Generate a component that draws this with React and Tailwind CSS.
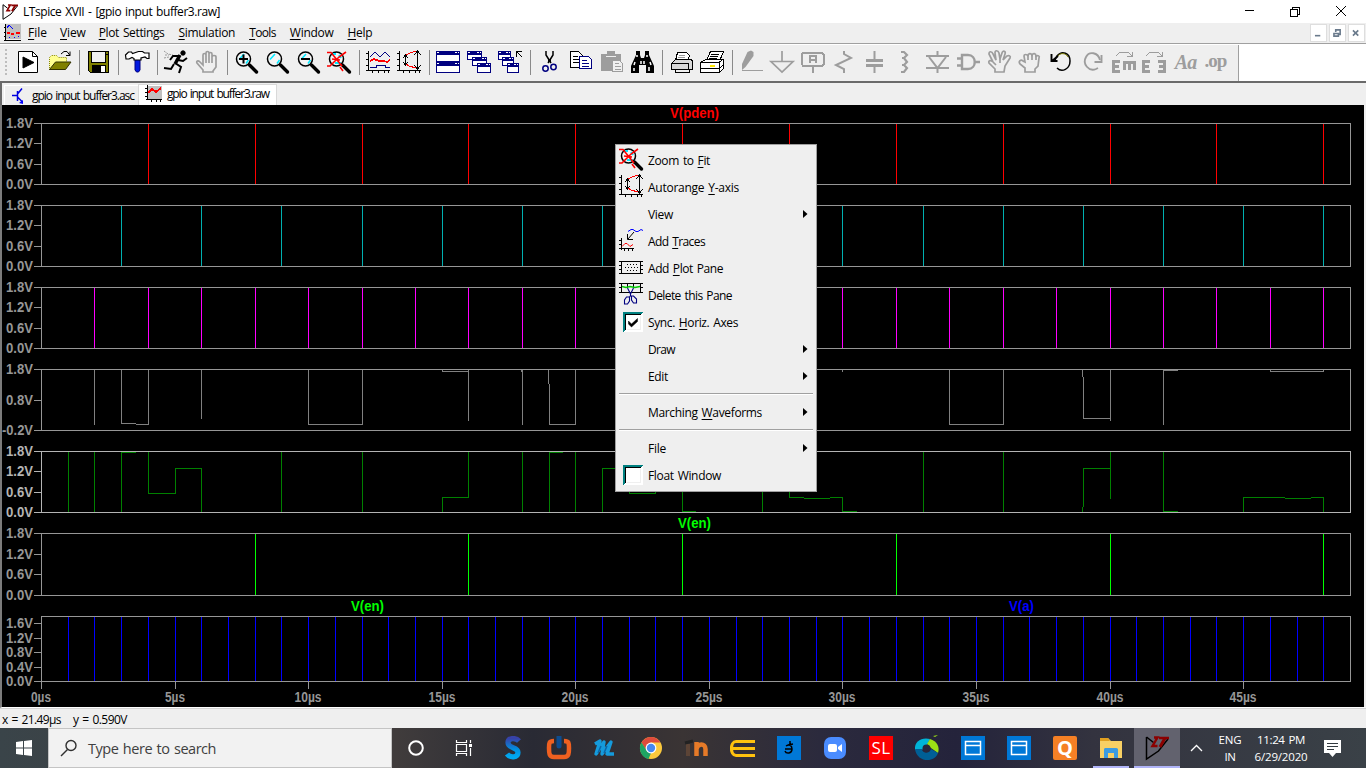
import { useLayoutEffect, useRef, useState } from "react";

// Text set to a fixed advance width through letter spacing.
function T({ w, children, className = "" }) {
  const ref = useRef(null);
  const [ls, setLs] = useState(0);
  useLayoutEffect(() => {
    const el = ref.current;
    const natural = el.getBoundingClientRect().width;
    setLs((w - natural) / el.textContent.length);
  }, [w]);
  return (
    <span ref={ref} className={"inline-block whitespace-pre [word-spacing:1.2px] " + className} style={{ letterSpacing: ls + "px" }}>
      {children}
    </span>
  );
}

// "&" marks the accelerator letter.
function Accel({ text }) {
  const i = text.indexOf("&");
  if (i < 0) return text;
  return (
    <>
      {text.slice(0, i)}
      <u className="underline underline-offset-2">{text[i + 1]}</u>
      {text.slice(i + 2)}
    </>
  );
}

const G = "#9d9d9d";

function Ico({ children, ...p }) {
  return (
    <svg width="25" height="25" viewBox="0 0 25 25" fill="none" stroke="#000" strokeWidth="1" className="block shrink-0 overflow-visible" {...p}>
      {children}
    </svg>
  );
}

const Lens = ({ sign, cross, ...p }) => (
  <Ico {...p}>
    <circle cx="9.500" cy="9" r="7" fill="#f4f4f4" strokeWidth="1.500" />
    {!cross && <path d="M5 9.500l5-5.500M12 13.500l2.500-3.500" stroke="#00e8ff" strokeWidth="1.500" />}
    {cross && <path d="M6 4h3M8 13h6M12 5l2 3" stroke="#00e8ff" strokeWidth="2" />}
    <path d="M15.500 15l7 7" strokeWidth="3.400" strokeLinecap="round" />
    {sign && <path d={sign} strokeWidth="2" />}
    {cross && <path d="M0 2.500h4l11 13.500M19 2l-7 5-9 9H0M5 9l8 1M13 17l3 4" stroke="#f00" strokeWidth="1.600" />}
  </Ico>
);

const AutoIcon = () => (
  <Ico shapeRendering="crispEdges">
    <path d="M2.500 1v20M0 3.500h3M0 9.500h3M0 15.500h3M0 20.500h24M6.500 20v3M12.500 20v3M18.500 20v3M22.500 20v3" />
    <path d="M8.500 6v8M6 8l2.500-3 2.500 3M6 12l2.500 3 2.500-3M20.500 2v16M17 5l3.500-4 3.500 4M17 15l3.500 4 3.500-4" />
    <path d="M9 5l4-2 6-2M9 14l3 2 7 2" stroke="#f00" />
  </Ico>
);

const Win = ({ x, y, w, h }) => (
  <g>
    <rect x={x + 0.5} y={y + 0.5} width={w - 1} height={h - 1} fill="#fff" stroke="#000080" />
    <rect x={x} y={y} width={w} height="4" fill="#000080" stroke="none" />
    <path d={`M${x + 1} ${y + 1.5}h2M${x + w - 5} ${y + 1.5}h2M${x + w - 2} ${y + 1.5}h1`} stroke="#fff" />
  </g>
);

const tools = [
  <Ico><path d="M2.500 1.500h14l5 5v16h-19z" fill="#fff" /><path d="M16.500 1.500v5h5" /><path d="M7 7l11 5.500L7 18z" fill="#000" /></Ico>,
  <Ico>
    <path d="M2.500 20V7.500l2-2h5l2 2h8v5" fill="#ffff90" stroke="#888800" strokeDasharray="1 1" />
    <path d="M2.500 19.500l6-7.500h15.500l-5.500 7.500z" fill="#808000" stroke="#303000" />
    <path d="M14 4l3-2.500h3l3 4M19 5.500h4V1.500" />
  </Ico>,
  "|",
  <Ico shapeRendering="crispEdges">
    <path d="M2.500 1.500h20v21h-18l-2-2z" fill="#808000" />
    <path d="M6 2h13v10H6z" fill="#f0f0f0" stroke="none" /><path d="M5.500 2v10.500h14V2M20 4h2" />
    <path d="M6 15h14v8H6z" fill="#000" stroke="none" /><path d="M15 16h4v6h-4z" fill="#fff" stroke="none" />
  </Ico>,
  "|",
  <Ico>
    <path d="M10 9h5v11l-1.500 2h-2L10 20z" fill="#0018e0" stroke="#000080" />
    <path d="M.5 5l3-3h3l1 1.500 6-2h4l2 1.500h4.500v5.500h-2l-2-1.500-4 1v2H9V8.500l-2-1-3 1.500H1z" fill="#fff" strokeWidth="1.200" />
  </Ico>,
  "|",
  <Ico>
    <path d="M0 1l4 3 5 1M0 8l5-1M1 5h4" stroke="#999" strokeDasharray="2 1" />
    <circle cx="19" cy="3" r="2.200" fill="#000" />
    <path d="M16 5l-5 9" strokeWidth="3.500" />
    <path d="M16 6L9 6 6 10M14 10l5 1 4-3M11 13l6 4-2 6M10 14l-3 5-7-1" strokeWidth="2" />
  </Ico>,
  <Ico stroke={G} strokeWidth="1.700">
    <path d="M8 22v-2l-6-7c-1-2 1-3 3-1l3 3V5c0-2 3-2 3 0v8V3c0-2 3-2 3 0v10V4c0-2 3-2 3 0v9V7c0-2 4-2 4 0v10l-3 4v1z" />
  </Ico>,
  "|",
  <Lens sign="M5 9h9M9.500 4.500v9" />,
  <Lens />,
  <Lens sign="M5 9h9" />,
  <Lens cross />,
  "|",
  <Ico shapeRendering="crispEdges">
    <path d="M2.500 1v20M0 3.500h3M0 9.500h3M0 15.500h3M0 20.500h24M6.500 20v3M12.500 20v3M18.500 20v3M22.500 20v3" />
    <path d="M4 7l5-5 5 5 4-4 1-1 5 5M4 17h6v-2h9v2h5" stroke="#000080" />
    <path d="M4 11l4-2 5 2h5l3 1 3-2" stroke="#f00" strokeWidth="1.800" />
  </Ico>,
  <AutoIcon />,
  "|",
  <Ico shapeRendering="crispEdges"><Win x={0} y={1} w={24} h={11} /><Win x={0} y={12} w={24} h={11} /></Ico>,
  <Ico shapeRendering="crispEdges"><Win x={0} y={1} w={15} h={9} /><Win x={5} y={7} w={15} h={9} /><Win x={10} y={13} w={14} h={10} /></Ico>,
  <Ico shapeRendering="crispEdges">
    <Win x={0} y={1} w={13} h={9} /><Win x={4} y={7} w={12} h={9} /><Win x={9} y={13} w={12} h={10} />
    <path d="M24 7l-5-5M18.500 7V1.500H24" />
  </Ico>,
  "|",
  <Ico>
    <path d="M9 1v4l5 8M16 1v4l-5 8" strokeWidth="1.500" />
    <path d="M12.500 9v3" strokeWidth="3" />
    <circle cx="8.500" cy="18.500" r="2.700" stroke="#000080" strokeWidth="1.500" /><circle cx="16.500" cy="17" r="2.700" stroke="#000080" strokeWidth="1.500" />
  </Ico>,
  <Ico shapeRendering="crispEdges">
    <path d="M2.500 1.500h8l4 4v12h-12z" fill="#fff" /><path d="M5 6.500h5M5 9.500h6M5 12.500h6" />
    <path d="M11.500 6.500h9l3 3v9h-12z" fill="#fff" stroke="#000080" /><path d="M14 10.500h5M14 13.500h7M14 16.500h7" stroke="#000080" />
  </Ico>,
  <Ico shapeRendering="crispEdges">
    <path d="M2 4h6V1h8v3h6v17H2z" fill={G} stroke="none" /><path d="M7 6.500h10" stroke="#efefef" />
    <path d="M13.500 10.500h7l3 3v8h-10z" fill="#efefef" stroke={G} /><path d="M16 13.500h4M16 16.500h6M16 19h6" stroke={G} />
  </Ico>,
  <Ico>
    <path d="M6 1h4v4l1 3h3l1-3V1h4v4l5 11v7h-8v-8h-7v8H1v-7L6 5z" fill="#000" stroke="none" />
    <path d="M7 5v2M17 5v2M5 12l-1 3M11 11v3M14 11v3M20 12l1 3M4 18v3M19 17v4" stroke="#fff" strokeWidth="1.500" />
  </Ico>,
  "|",
  <Ico shapeRendering="crispEdges">
    <path d="M6.500 10.500l2-8h9l3 3-2 5z" fill="#fff" /><path d="M2.500 13.500l4-4h16l1 2v8h-21z" fill="#d8d8d8" />
    <path d="M3 13.500h16v6M6.500 19.500h14v3h-14z" fill="none" /><path d="M10 5.500h6M9 7.500h7" stroke="#999" />
  </Ico>,
  <Ico shapeRendering="crispEdges">
    <path d="M6.500 10l4-8.500h13L20 10z" fill="#fff" /><path d="M11 4.500h8M10 6.500h8M9 8.500h8" />
    <path d="M.5 12.500l5-3h18v9l-4 4H.5z" fill="#fff" /><path d="M1 12.500h18v10M1 18.500h18M19 12.500l4-3M19 18.500l4-3" />
    <path d="M10 15.500h5" stroke="#ffe800" strokeWidth="2" />
  </Ico>,
  "|",
  <Ico><path d="M3 20v-6L8.500 2l3.500-1.500L14.500 2v4L6.500 17z" fill={G} stroke="none" /><path d="M3 20.500h21" stroke={G} /></Ico>,
  <Ico stroke={G} strokeWidth="1.700"><path d="M12 1v10.500M1 11.500h22L12 22z" /></Ico>,
  <Ico stroke={G} strokeWidth="2" shapeRendering="crispEdges">
    <path d="M2 3h19l2 2v9l-2 2H2l-1-2V4zM12 16v7" /><path d="M9 13V6h6v7M9 10h6" />
  </Ico>,
  <Ico stroke={G} strokeWidth="2"><path d="M12 1v3l7 4L4 15l8 4v4" /></Ico>,
  <Ico stroke={G}><path d="M11.500 1v9M11.500 16v7" strokeWidth="2" /><path d="M3 10.500h17M3 15.500h17" strokeWidth="3" /></Ico>,
  <Ico stroke={G} strokeWidth="2.200"><path d="M7 2h3l3 3-3 3H8h2l3 4-3 3H8h2l3 3-3 4H7" /></Ico>,
  <Ico stroke={G} strokeWidth="2"><path d="M12.500 1v5M1 6h23M12.500 17v6M1 18h23M4 7l8.500 11L21 7" /></Ico>,
  <Ico stroke={G} strokeWidth="2.400"><path d="M6 5h6c9 0 9 14 0 14H6zM1 8.500h5M1 15.500h5M18 12h6" /></Ico>,
  <Ico stroke={G} strokeWidth="1.700">
    <path d="M8 22v-3l-6-6c-1-3 2-3 4-1L2 4c0-3 3-3 4 0l3 6L8 3c0-3 3-3 4 0l1 6 2-6c1-3 4-2 3 1l-2 6 4-4c2-1 4 0 3 2l-5 8-1 6z" /><path d="M6 12l3 3M13 9v4" />
  </Ico>,
  <Ico stroke={G} strokeWidth="1.700">
    <path d="M7 22v-4l-5-4c-2-3 1-5 3-3l2 1-1-6c0-2 3-2 4 0 0-3 3-3 4-1 1-2 4-2 4 1 2-1 4 0 3 2l-1 8-3 3v3z" /><path d="M10 5v5M14 5v5M18 6v4" />
  </Ico>,
  <Ico><path d="M6 10l2-4c5-6 13-3 13 5 0 8-8 12-13 7" strokeWidth="1.500" /><path d="M8 7c3-5 9-4 11 0" stroke="#808000" /><path d="M2.500 4v7h6M3 11l6-5" strokeWidth="1.900" /></Ico>,
  <Ico stroke={G}><path d="M20 10c-2-8-11-9-14-3-4 7 3 15 10 12l2-1" strokeWidth="1.900" /><path d="M21.500 5v7h-7" strokeWidth="1.900" /></Ico>,
  <Ico stroke={G} strokeWidth="3" shapeRendering="crispEdges">
    <path d="M9 11.500H2.500v10H9M2 16.500h6M13 20v-7.500h10V20M18 13v7" /><path d="M5 6l4-4h8l4 4M21 2v4.500h-5" strokeWidth="1" />
  </Ico>,
  <Ico stroke={G} strokeWidth="3" shapeRendering="crispEdges">
    <path d="M8 11.500H1.500v10H8M1 16.500h6M16 11.500h6.500v10H16M17 16.500h5" /><path d="M4 6l4-4h8l4 4M20 2v4.500h-5" strokeWidth="1" />
  </Ico>,
  <span className="w-[25px] text-center font-['Liberation_Serif',serif] text-[20px] leading-[25px] font-bold tracking-[-1px] italic text-[#9d9d9d]">Aa</span>,
  <span className="w-[25px] -translate-y-[2px] pr-[2px] text-center font-['Liberation_Serif',serif] text-[19px] leading-[24px] font-bold tracking-[-1px] text-[#9d9d9d]">.op</span>,
];

const LTLogo = ({ size = 17 }) => (
  <svg width={size} height={size} viewBox="0 0 24 24" fill="none" className="block shrink-0 overflow-visible">
    <path d="M1.500 1v22l12-8L23 3" stroke="#000" strokeWidth="1.500" />
    <path d="M1.500 1l7 5.500" stroke="#000" strokeWidth="1.500" />
    <path d="M9 1.500h3.500L7.500 10h5M14 2h10" stroke="#8b0000" strokeWidth="2.400" />
    <path d="M20 2l-5 9" stroke="#8b0000" strokeWidth="3" />
  </svg>
);

// ---- waveform chart -------------------------------------------------------
const X0 = 41;
const xs = (n) => Math.round(X0 + n * 26.714);
const spikes = (step, y1, y2) => {
  let d = "";
  for (let n = step; n <= 48; n += step) d += `M${xs(n) + 0.5} ${y1}V${y2}`;
  return d;
};
const seg = (...pts) => "M" + pts.map(([x, y]) => `${x + 0.5} ${y + 0.5}`).join("L");

const v4 = ["1.8V", "1.2V", "0.6V", "0.0V"];
const panes = [
  { top: 123, bot: 184, marks: [123, 143, 164, 184], labels: v4, color: "#ff0000", d: spikes(4, 124, 184) },
  { top: 205, bot: 266, marks: [205, 225, 246, 266], labels: v4, color: "#00b0b0", d: spikes(3, 206, 266) },
  { top: 287, bot: 348, marks: [287, 307, 328, 348], labels: v4, color: "#ff00ff", d: spikes(2, 288, 348) },
  {
    top: 369, bot: 430, marks: [369, 400, 430], labels: ["1.8V", "0.8V", "-0.2V"], color: "#808080",
    d: [
      seg([94, 369], [94, 424]), seg([121, 369], [121, 423], [135, 423]), seg([135, 424], [148, 424], [148, 369]),
      seg([201, 369], [201, 418]), seg([308, 369], [308, 424], [362, 424], [362, 369]),
      seg([442, 369], [442, 371], [468, 371]), seg([468, 369], [468, 420]), seg([521, 369], [521, 371]), seg([522, 369], [522, 424]),
      seg([548, 369], [548, 383]), seg([549, 383], [549, 424], [575, 424], [575, 369]), seg([842, 369], [842, 371]),
      seg([949, 369], [949, 424], [1003, 424], [1003, 369]), seg([1082, 369], [1082, 376]),
      seg([1083, 376], [1083, 418], [1110, 418]), seg([1110, 369], [1110, 420]), seg([1163, 369], [1163, 424]),
      seg([1163, 370], [1177, 370]), seg([1270, 369], [1270, 371], [1323, 371], [1323, 369]),
    ].join(""),
  },
  {
    top: 451, bot: 512, marks: [451, 471, 492, 512], labels: v4, color: "#008000", active: true,
    d: [
      ...[68, 94, 121, 281, 362, 522, 549, 575, 762, 682, 923, 1003, 1163].map((x) => seg([x, 451], [x, 512])),
      seg([121, 452], [135, 452]), seg([148, 451], [148, 493], [175, 493], [175, 468], [201, 468], [201, 512]),
      seg([442, 512], [442, 497], [468, 497], [468, 451]), seg([549, 452], [562, 452]), seg([602, 512], [602, 468], [629, 468]),
      seg([629, 468], [629, 493], [655, 493], [655, 480]), seg([682, 511], [695, 511]),
      seg([789, 451], [789, 497], [803, 497]), seg([803, 498], [829, 498]), seg([829, 497], [842, 497], [842, 511], [856, 511]),
      seg([1082, 506], [1082, 512]), seg([1083, 506], [1083, 468], [1110, 468]), seg([1110, 451], [1110, 498]),
      seg([1163, 511], [1177, 511]), seg([1243, 512], [1243, 497], [1284, 497]), seg([1284, 498], [1310, 498]),
      seg([1310, 497], [1323, 497], [1323, 512]),
    ].join(""),
  },
  { top: 533, bot: 595, marks: [533, 554, 574, 595], labels: v4, color: "#00ff00", d: spikes(8, 534, 595) },
  { top: 616, bot: 681, marks: [623, 638, 652, 667, 681], labels: ["1.6V", "1.2V", "0.8V", "0.4V", "0.0V"], color: "#0000ff", d: spikes(1, 617, 681) },
];

function Chart() {
  return (
    <svg width="1362" height="602" viewBox="2 105 1362 602" className="block bg-black font-['Liberation_Sans',Arial,sans-serif] text-[14px] font-bold">
      {panes.map((p) => {
        const c = p.active ? "#b4b4b4" : "#969696";
        return (
          <g key={p.top}>
            <path d={p.d} fill="none" stroke={p.color} shapeRendering="crispEdges" />
            <path
              d={`M${X0 + 0.5} ${p.top + 0.5}H1350.500V${p.bot + 0.5}H${X0 + 0.5}Z` + p.marks.map((m) => `M34 ${m + 0.5}h8`).join("")}
              fill="none" stroke={c} shapeRendering="crispEdges"
            />
            {p.labels.map((l, i) => (
              <text key={i} x={33} y={p.marks[i] + 5} textAnchor="end" textLength={l.length > 4 ? 31 : 27} lengthAdjust="spacingAndGlyphs" fill={c}>{l}</text>
            ))}
          </g>
        );
      })}
      {[0, 5, 10, 15, 20, 25, 30, 35, 40, 45].map((n) => (
        <g key={n}>
          <path d={`M${xs(n) + 0.5} 682v7`} stroke="#969696" shapeRendering="crispEdges" />
          <text x={xs(n)} y="702" textAnchor="middle" textLength={n < 10 ? 20 : 27} lengthAdjust="spacingAndGlyphs" fill="#969696">{n}µs</text>
        </g>
      ))}
      <text x="670" y="118" textLength="49" lengthAdjust="spacingAndGlyphs" fill="#ff0000">V(pden)</text>
      <text x="678" y="528" textLength="33" lengthAdjust="spacingAndGlyphs" fill="#00ff00">V(en)</text>
      <text x="351" y="611" textLength="33" lengthAdjust="spacingAndGlyphs" fill="#00ff00">V(en)</text>
      <text x="1009" y="611" textLength="25" lengthAdjust="spacingAndGlyphs" fill="#0000ff">V(a)</text>
    </svg>
  );
}

// ---- context menu ---------------------------------------------------------
const Check = ({ on }) => (
  <svg width="20" height="20" className="ml-1 block" shapeRendering="crispEdges">
    <path d="M0 0h20v20H0z" fill="#fff" /><path d="M0 20V0h20l-2 2H2v16z" fill="#008080" />
    <path d="M2.500 18V2.500H18" fill="none" stroke="#000" /><path d="M4 17.500h13.500V4" fill="none" stroke="#efefef" />
    {on && <path d="M5.500 9l3 3 6-5.500v3L8.500 15l-3-3z" fill="#000" stroke="#000" strokeWidth=".5" shapeRendering="auto" />}
  </svg>
);

const menu = [
  { t: "Zoom to &Fit", w: 62, icon: <Lens cross /> },
  { t: "Autorange &Y-axis", w: 91, icon: <AutoIcon /> },
  { t: "View", w: 25, sub: true },
  {
    t: "Add &Traces", w: 57,
    icon: (
      <Ico>
        <path d="M2.500 10v12M0 12.500h2M0 16.500h2M0 20.500h15M5.500 20v3M9.500 20v3M13.500 20v3" shapeRendering="crispEdges" />
        <path d="M3 18.500l3-3h2l3 3 3-2" stroke="#f00" /><path d="M9 3.500l3-2h2l3 2h2l3-2 2 1" stroke="#00f" />
        <path d="M15 4l-6 7M8.500 6v5.500H14" />
      </Ico>
    ),
  },
  {
    t: "Add &Plot Pane", w: 75,
    icon: (
      <Ico shapeRendering="crispEdges">
        <path d="M0 6.500h24M0 18.500h24M2.500 6v12M21.500 6v12M0 10.500h3M0 14.500h3M21 10.500h3M21 14.500h3" />
        <path d="M8 9.500h11M6 12.500h13M8 15.500h11" strokeDasharray="1 2" strokeWidth="1.500" />
      </Ico>
    ),
  },
  {
    t: "Delete this Pane", w: 84,
    icon: (
      <Ico>
        <path d="M0 1.500h24M0 10.500h24M2.500 1v9M8.500 1v5M14.500 1v5M21.500 1v9M0 5.500h2M21 5.500h3" shapeRendering="crispEdges" />
        <path d="M3 4.500l4 1 4-1 5 1 5-1" stroke="#0c0" strokeWidth="1.300" />
        <path d="M8.500 6l3 6v2M14.500 6l-3 6M11.500 14l-1 1H7.500L5.500 18v4h3l2-3v-4M12.500 14h2l3 3v4h-3l-2-3z" stroke="#000080" strokeWidth="1.100" />
      </Ico>
    ),
  },
  { t: "Sync. &Horiz. Axes", w: 90, icon: <Check on /> },
  { t: "Draw", w: 27, sub: true },
  { t: "Edit", w: 20, sub: true },
  "-",
  { t: "Marching &Waveforms", w: 114, sub: true },
  "-",
  { t: "File", w: 18, sub: true },
  { t: "Float Window", w: 73, icon: <Check /> },
];

function ContextMenu() {
  return (
    <div className="absolute top-[144px] left-[615px] flex w-[202px] flex-col border border-[#a0a0a0] bg-[#efefef] py-[2px] text-[12px]">
      {menu.map((m, i) =>
        m === "-" ? (
          <div key={i} className="mx-[3px] flex h-[9px] items-start pt-[3px]"><div className="h-[2px] w-full border-t border-[#a0a0a0] bg-white" /></div>
        ) : (
          <div key={i} className="flex h-[27px] items-center pl-[3px]">
            <div className="w-[29px] shrink-0 -translate-y-px">{m.icon}</div>
            <T w={m.w}><Accel text={m.t} /></T>
            {m.sub && <svg width="5" height="8" className="mr-[8px] ml-auto -translate-y-px"><path d="M0 0l4.500 4L0 8z" /></svg>}
          </div>
        )
      )}
    </div>
  );
}

// ---- taskbar --------------------------------------------------------------
const BlueWin = () => (
  <svg width="24" height="24"><path d="M0 0h24v24H0z" fill="#0078d7" /><path d="M4.500 5.500h15v13h-15zM4 9.500h16" fill="none" stroke="#fff" strokeWidth="1.500" /></svg>
);

const apps = [
  <svg width="18" height="18"><circle cx="9" cy="9" r="6.800" fill="none" stroke="#fff" strokeWidth="2" /></svg>,
  <svg width="18" height="18" viewBox="0 0 18 18" fill="none" stroke="#fff" strokeWidth="1.200"><path d="M1.500 1v2.500h10V1M1.500 5.500h10v7h-10zM1.500 17v-2.500h10V17M15.500 1v3M15.500 9v8" /><path d="M14 5h3v3h-3z" fill="#fff" stroke="none" /></svg>,
  <svg width="24" height="24" viewBox="0 0 24 24"><defs><linearGradient id="s" x2="0" y2="1"><stop stopColor="#3742a8" /><stop offset=".6" stopColor="#0090e0" /><stop offset="1" stopColor="#00a8f0" /></linearGradient></defs><path d="M18 5C15 1.500 7 1.500 7 6.500c0 6.500 10 4 10 10 0 5.500-8 5.500-11 1.500" fill="none" stroke="url(#s)" strokeWidth="5.200" /></svg>,
  <svg width="26" height="24" viewBox="0 0 26 24" fill="none"><path d="M8 5C3 5 3 7 3 12s0 9 5 9h10c5 0 5-4 5-9s0-7-5-7" stroke="#f06020" strokeWidth="4.500" /><path d="M13 0v10" stroke="#0c4c90" strokeWidth="5" strokeLinecap="round" /></svg>,
  <svg width="24" height="24" viewBox="0 0 24 24" fill="none" stroke="#159bdc" strokeLinejoin="round"><path d="M2 8l5-3-4 13 8-12-2 12 9-12-4 12h7" strokeWidth="3.400" /><path d="M8 10l-3 7M14 10l-3 7" stroke="#0b66a8" strokeWidth="1.500" /></svg>,
  <svg width="24" height="24" viewBox="0 0 24 24"><circle cx="12" cy="12" r="11" fill="#fbc93d" /><path d="M2.500 6.500A11 11 0 0 1 21.500 6.500H12L7.500 15z" fill="#de4b3c" /><path d="M2.500 6.500L8 15l4 2-2.500 6A11 11 0 0 1 2.500 6.500z" fill="#1fa463" /><circle cx="12" cy="12" r="5.400" fill="#fff" /><circle cx="12" cy="12" r="4.200" fill="#4688f1" /></svg>,
  <svg width="26" height="24" viewBox="0 0 26 24" fill="none"><path d="M4 8v12" stroke="#5c4436" strokeWidth="4" /><path d="M1 7l8-2" stroke="#222" strokeWidth="3" /><path d="M11 6v14M12 20v-9c1-4 6-4 6 1v8M12 12" stroke="none" /><path d="M12.500 20V6M12.500 13c1-6 9-6 9 0v7" stroke="#e57a28" strokeWidth="4.500" /></svg>,
  <svg width="26" height="24" viewBox="0 0 26 24" fill="none" stroke="#ffc20e" strokeWidth="3.200"><path d="M25 5.500H6C0 5.500 0 19.500 6 19.500h19M3 12.500h22" /></svg>,
  <div className="flex h-6 w-6 items-center justify-center bg-[#0078d7]"><svg width="12" height="14" viewBox="0 0 12 14" fill="none" stroke="#000" strokeWidth="1.500"><path d="M7 0v3M3 5c3-2 6-1 6 3 0 5-6 5-7 2M2 8h7M5 4l5-1" /></svg></div>,
  <svg width="24" height="24"><rect x="1" y="1" width="22" height="22" rx="7" fill="#4a8cff" /><rect x="5" y="8" width="9" height="8" rx="2" fill="#fff" /><path d="M15 11l4-3v8l-4-3z" fill="#fff" /></svg>,
  <div className="flex h-6 w-6 items-center justify-center bg-[#ff0000] text-[17px] text-white"><T w={19}>SL</T></div>,
  <svg width="26" height="26" viewBox="0 0 26 26"><path d="M1 15C0 6 8 2 16 4l-3 6-5 5z" fill="#00b4d8" /><path d="M16 4c7 2 10 8 8 14l-7-5-4-4z" fill="#9be015" /><path d="M19 1l5-1-3 2z" fill="#9be015" /><path d="M1 14c2 14 20 14 23 4l-7-4c-2 5-9 4-9 0z" fill="#005f96" /><circle cx="12.500" cy="13.500" r="4" fill="#28263c" /></svg>,
  <BlueWin />,
  <BlueWin />,
  <div className="flex h-6 w-6 items-center justify-center rounded-[2px] bg-[#f58025] text-[20px] leading-none font-bold text-white">Q</div>,
  <svg width="24" height="22" viewBox="0 0 24 22"><path d="M1 1h8l3 3h11v17H1z" fill="#f8d064" /><path d="M1 1h8l2 3H1z" fill="#e0a020" /><path d="M5 21v-8c0-2 1-2 2-2h10c2 0 2 1 2 2v8h-4v-5H9v5z" fill="#3c9be0" /></svg>,
  <LTLogo size={24} />,
];

function Taskbar() {
  return (
    <div className="flex h-10 shrink-0 bg-[linear-gradient(90deg,#3a4449_0%,#403c3c_29%,#292a34_39%,#3a3434_50%,#2b2a3d_60%,#24233b_70%,#33333f_80%,#3a4147_100%)] text-white">
      <div className="flex w-12 items-center justify-center">
        <svg width="16" height="16"><path d="M0 2l7-1v6.500H0zM8 1l8-1v7.500H8zM0 8.500h7V15l-7-1zM8 8.500h8V16l-8-1z" fill="#fff" /></svg>
      </div>
      <div className="flex w-[344px] items-center border border-[#c4c4c4] bg-[#f2f2f2] pl-[11px] text-[#404040]">
        <svg width="18" height="18" fill="none" stroke="#303030" strokeWidth="1.400"><circle cx="11" cy="6.500" r="5" /><path d="M7.500 10.500L1 17" /></svg>
        <span className="ml-[10px] pt-px text-[14.500px]"><T w={128}>Type here to search</T></span>
      </div>
      <div className="ml-px flex">
        {apps.map((a, i) => (
          <div
            key={i}
            className={
              "flex h-10 w-[46px] items-center justify-center border-b-2 pt-[2px] " +
              (i === 16 ? "bg-[#62626e] border-[#b0b4f8]" : "border-transparent") +
              (i === 1 ? " ml-[2px]" : i === 2 ? " ml-[3px]" : "")
            }
          >
            {i === 15 ? <div className="flex h-10 w-9 shrink-0 items-center justify-center border-b-2 border-[#b0b4f8] pt-[2px]">{a}</div> : a}
          </div>
        ))}
      </div>
      <div className="flex flex-1 items-center text-[11.500px] leading-[17px]">
        <svg width="14" height="8" className="ml-[10px]" fill="none" stroke="#fff" strokeWidth="1.300"><path d="M1 7l5.500-5.500L12 7" /></svg>
        <div className="ml-[14px] w-6 text-center"><T w={23}>ENG</T><T w={11}>IN</T></div>
        <div className="ml-[11px] w-[56px] text-center"><T w={48}>11:24 PM</T><T w={53}>6/29/2020</T></div>
        <svg width="17" height="17" className="ml-[15px]"><path d="M0 0h17v13h-5l-3.500 4L5 13H0z" fill="#fff" /><path d="M3 3.500h11M3 6.500h11M3 9.500h7" stroke="#333a40" /></svg>
      </div>
    </div>
  );
}

const menus = [["&File", 19], ["&View", 26], ["&Plot Settings", 66], ["&Simulation", 57], ["&Tools", 27], ["&Window", 44], ["&Help", 25]];

export default function App() {
  return (
    <div className="relative flex h-[768px] w-[1366px] flex-col overflow-hidden bg-[#efefef] font-['Open_Sans','Noto_Sans',sans-serif] text-[12px] leading-[16px] text-black">
      <div className="flex h-[23px] shrink-0 items-center bg-white pl-[2px]">
        <LTLogo size={16} />
        <span className="ml-[5px]"><T w={197}>LTspice XVII - [gpio input buffer3.raw]</T></span>
        <svg width="110" height="12" className="mr-[18px] ml-auto -translate-y-px" fill="none" stroke="#000" shapeRendering="crispEdges">
          <path d="M7 5.500h9M52.500 4.500h7v7h-7zM54.500 4V2.500h7v7H60" />
          <path d="M98 1l10 10M108 1L98 11" shapeRendering="auto" />
        </svg>
      </div>
      <div className="flex h-[20px] shrink-0 items-center pl-1">
        <svg width="17" height="18" shapeRendering="crispEdges" className="mr-[7px]" fill="none">
          <path d="M2 0h15v15H2z" fill="#c0c0c0" /><path d="M1.500 0v17M0 3.500h2M0 8.500h2M0 12.500h2M0 16.500h17" stroke="#000" />
          <path d="M3 4l2-3 4 4" stroke="#00f" /><path d="M3 9h3M7 10h3M12 9h4" stroke="#f00" strokeWidth="1.500" /><path d="M5 13h1M10 13h1M14 12h1" stroke="#00f" />
        </svg>
        {menus.map(([t, w], i) => <span key={t} className={i === 1 ? "ml-[13px]" : i === 2 ? "ml-[13px]" : i ? "ml-[14px]" : ""}><T w={w - (i ? 0.3 : 0)}><Accel text={t} /></T></span>)}
        <div className="mr-px ml-auto flex gap-[2px]">
          {["M5 12h6", "M5 9.500h5v3H5zM7 8V5.500h5v5h-2", "M5 6l6 6M11 6l-6 6"].map((d) => (
            <svg key={d} width="17" height="18" className="border border-[#dedede] bg-white" viewBox="1 0 16 18"><path d={d} fill="none" stroke="#6a7a8c" strokeWidth="1.800" /></svg>
          ))}
        </div>
      </div>
      <div className="flex h-[38px] shrink-0 border-t border-[#a0a0a0] bg-white pt-px">
        <div className="flex w-[1239px] items-center border-r border-[#a0a0a0] bg-[#efefef] pb-px pl-[5px]">
          <div className="mr-[6px] h-[28px] w-[2px] bg-[repeating-linear-gradient(180deg,#bdbdbd_0px_2px,#efefef_2px_4px)]" />
          {tools.map((t, i) =>
            t === "|" ? (
              <div key={i} className="flex w-2 shrink-0 justify-center"><div className="h-[25px] w-px bg-[#8a8a8a]" /></div>
            ) : (
              <div key={i} className="flex w-[31px] shrink-0 justify-center">{t}</div>
            )
          )}
        </div>
      </div>
      <div className="flex h-[24px] shrink-0 items-end border-t-2 border-l-2 border-[#6a6a6a] pl-[2px]">
        <div className="flex h-[20px] w-[134px] items-center border-t border-l border-white pl-[6px]">
          <svg width="16" height="18" fill="none" stroke="#0000e0" strokeWidth="1.500"><path d="M1 8.500h5M6.500 4v10M6.500 7L11 1.500M6.500 10l5 5" /><path d="M12 17v-4l-4 3z" fill="#00f" stroke="none" /></svg>
          <span className="ml-[5px]"><T w={102}>gpio input buffer3.asc</T></span>
        </div>
        <div className="flex h-[21px] w-[139px] items-center border border-b-0 border-[#d9d9d9] bg-white pb-[3px] pl-[6px]">
          <svg width="17" height="17" shapeRendering="crispEdges" fill="none"><path d="M2 1h15v13H2z" fill="#c0c0c0" /><path d="M2.500 0v15M0 3.500h2M0 7.500h2M0 11.500h2M1 14.500h16M6.500 15v2M11.500 15v2M15.500 15v2" stroke="#000" /><path d="M3 8l4-4 4 3 5-4" stroke="#f00" strokeWidth="2" /></svg>
          <span className="ml-[5px]"><T w={102}>gpio input buffer3.raw</T></span>
        </div>
      </div>
      <div className="flex h-[603px] shrink-0 flex-col border-r-2 border-b border-l-2 border-[#efefef] border-l-[#7c7c7c] border-b-white">
        <Chart />
      </div>
      <div className="flex h-[20px] shrink-0 items-center border-t border-[#d4d4d4] pt-[3px] pl-[2px]">
        <T w={59}>x = 21.49µs</T>
        <span className="ml-[12px]"><T w={54}>y = 0.590V</T></span>
      </div>
      <Taskbar />
      <ContextMenu />
    </div>
  );
}
